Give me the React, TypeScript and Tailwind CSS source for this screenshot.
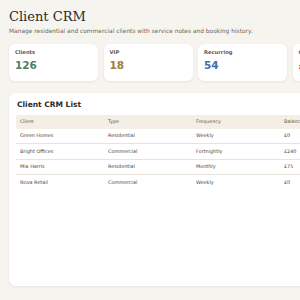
import React from "react";

const stats = [
  { label: "Clients", value: "126", color: "text-[#4f7d6b]" },
  { label: "VIP", value: "18", color: "text-[#a07c3c]" },
  { label: "Recurring", value: "54", color: "text-[#3d6fa8]" },
  { label: "Overdue", value: "£315", color: "text-[#b5483b]" },
];

const rows = [
  ["Green Homes", "Residential", "Weekly", "£0"],
  ["Bright Offices", "Commercial", "Fortnightly", "£240"],
  ["Mia Harris", "Residential", "Monthly", "£75"],
  ["Nova Retail", "Commercial", "Weekly", "£0"],
];

export default function App() {
  return (
    <div className="w-[300px] h-[300px] overflow-hidden bg-[#f6f4ee] font-['DejaVu_Sans',sans-serif]">
      <div className="w-[380px] px-[9px] pt-[9px]">
        <h1 className="font-['DejaVu_Serif',serif] text-[13px] leading-[16px] text-[#2a2a2a] font-normal">
          Client CRM
        </h1>
        <p className="mt-[2px] text-[5.9px] leading-[8px] text-[#6b6760]">
          Manage residential and commercial clients with service notes and booking history.
        </p>
        <div className="mt-[9px] flex gap-[5.5px]">
          {stats.map((s) => (
            <div
              key={s.label}
              className="w-[89px] h-[37px] shrink-0 rounded-[6px] bg-white shadow-[0_1px_3px_rgba(60,50,30,0.08)] px-[6px] pt-[5px]"
            >
              <div className="text-[5.2px] leading-[7px] font-bold text-[#5d5a55]">{s.label}</div>
              <div className={`mt-[3px] text-[10.5px] leading-[13px] font-bold ${s.color}`}>{s.value}</div>
            </div>
          ))}
        </div>
        <div className="mt-[12px] w-[374px] h-[193px] rounded-[7px] bg-white shadow-[0_1px_3px_rgba(60,50,30,0.08)] px-[7px] pt-[6px]">
          <h2 className="text-[7.5px] leading-[12px] font-bold text-[#2a2a2a] pl-[1px]">Client CRM List</h2>
          <div className="mt-[4px]">
            <div className="flex h-[14px] items-center bg-[#f3efe6] text-[4.8px] text-[#5d5a55]">
              <div className="w-[88px] shrink-0 pl-[4px]">Client</div>
              <div className="w-[88px] shrink-0 pl-[4px]">Type</div>
              <div className="w-[88px] shrink-0 pl-[4px]">Frequency</div>
              <div className="w-[88px] shrink-0 pl-[4px]">Balance</div>
            </div>
            {rows.map((r, i) => (
              <div
                key={r[0]}
                className={`flex h-[15.3px] items-center text-[4.9px] text-[#4a4742] ${i < rows.length - 1 ? "border-b border-[#e8e4db]" : ""}`}
              >
                {r.map((c, j) => (
                  <div key={j} className="w-[88px] shrink-0 pl-[4px]">{c}</div>
                ))}
              </div>
            ))}
          </div>
        </div>
      </div>
    </div>
  );
}
